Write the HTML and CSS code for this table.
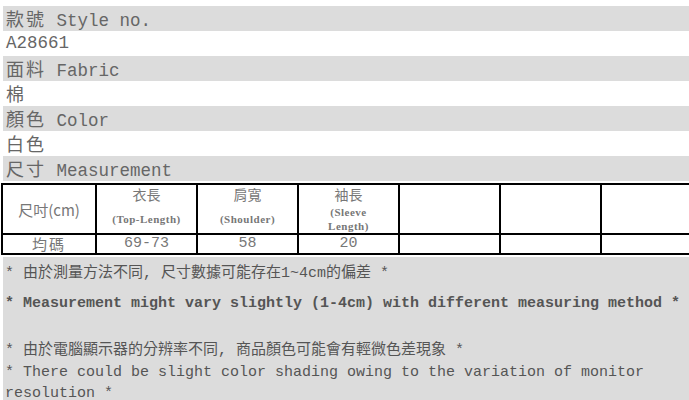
FILE: index.html
```html
<!DOCTYPE html>
<html lang="zh-Hant">
<head>
  <meta charset="UTF-8">
  <meta name="viewport" content="width=device-width, initial-scale=1.0">
  <title>Style A28661</title>
  <link rel="stylesheet" href="styles.css">
</head>
<body>
  <div class="info">
    <div class="row shade"><span class="zh">款號</span> Style no.</div>
    <div class="row">A28661</div>
    <div class="row shade"><span class="zh">面料</span> Fabric</div>
    <div class="row"><span class="zh">棉</span></div>
    <div class="row shade"><span class="zh">顏色</span> Color</div>
    <div class="row"><span class="zh">白色</span></div>
    <div class="row shade"><span class="zh">尺寸</span> Measurement</div>
  </div>

  <div class="table-wrap">
    <table class="size-table">
      <colgroup>
        <col class="first">
        <col><col><col><col><col><col>
      </colgroup>
      <tr class="head">
        <td class="label">尺吋(cm)</td>
        <td><div class="zh-head">衣長</div><div class="en-head">(Top-Length)</div></td>
        <td><div class="zh-head">肩寬</div><div class="en-head">(Shoulder)</div></td>
        <td><div class="zh-head">袖長</div><div class="en-head narrow">(Sleeve Length)</div></td>
        <td></td>
        <td></td>
        <td></td>
      </tr>
      <tr class="body">
        <td class="label">均碼</td>
        <td>69-73</td>
        <td>58</td>
        <td>20</td>
        <td></td>
        <td></td>
        <td></td>
      </tr>
    </table>
  </div>

  <div class="notes">
    <p class="note-zh">* 由於測量方法不同, 尺寸數據可能存在1~4cm的偏差 *</p>
    <p class="note-en">* Measurement might vary slightly (1-4cm) with different measuring method *</p>
    <p class="note-zh gap">* 由於電腦顯示器的分辨率不同, 商品顏色可能會有輕微色差現象 *</p>
    <p class="note-en tight">* There could be slight color shading owing to the variation of monitor resolution *</p>
  </div>
</body>
</html>
```

FILE: styles.css
```css
body {
  margin: 0;
  padding-top: 6px;
  overflow: hidden;
  font-family: "Liberation Mono", "Noto Sans CJK TC", monospace;
  color: #666;
  background: #fff;
}

.info {
  margin-left: 3px;
}

.row {
  height: 25px;
  line-height: 25px;
  padding-left: 3px;
  font-size: 17.5px;
  white-space: nowrap;
}

.row.shade {
  background-color: #dcdcdc;
}

.zh {
  font-family: "Noto Sans CJK TC", sans-serif;
  font-size: 18px;
  letter-spacing: 2px;
}

.table-wrap {
  margin-top: 2px;
  margin-left: 1px;
  width: 720px;
}

.size-table {
  border-collapse: collapse;
  table-layout: fixed;
  width: 700px;
  border: 2px solid #000;
}

.size-table col {
  width: 101px;
}

.size-table col.first {
  width: 94px;
}

.size-table td {
  border: 2px solid #000;
  padding: 0;
  text-align: center;
  vertical-align: middle;
  color: #777;
  font-size: 15px;
}

.size-table tr.head td {
  height: 40px;
  vertical-align: top;
}

.size-table tr.head td.label {
  vertical-align: middle;
  font-family: "Noto Sans CJK TC", sans-serif;
  font-size: 15px;
}

.size-table tr.body td {
  height: 18px;
  line-height: 18px;
}

.size-table tr.body td.label {
  font-family: "Noto Sans CJK TC", sans-serif;
  font-size: 15px;
  letter-spacing: 2px;
}

.zh-head {
  font-family: "Noto Sans CJK TC", sans-serif;
  font-size: 14px;
  line-height: 19px;
}

.en-head {
  font-family: "Liberation Serif", serif;
  font-weight: bold;
  font-size: 11px;
  line-height: 14px;
  margin-top: 8px;
  letter-spacing: 0.5px;
}

.en-head.narrow {
  margin-top: 1px;
  padding: 0 22px;
}

.notes {
  margin-top: 2px;
  margin-left: 3px;
  padding: 6px 0 20px 2px;
  background-color: #dcdcdc;
  color: #555;
  font-size: 15px;
}

.notes p {
  margin: 0;
  line-height: 21px;
}

.note-zh {
  font-family: "Liberation Mono", "Noto Sans CJK TC", monospace;
}

.note-en {
  margin-top: 9px !important;
  font-weight: bold;
}

.note-zh.gap {
  margin-top: 26px !important;
}

.note-en.tight {
  margin-top: 1px !important;
  font-weight: normal;
  padding-right: 40px;
}
```
